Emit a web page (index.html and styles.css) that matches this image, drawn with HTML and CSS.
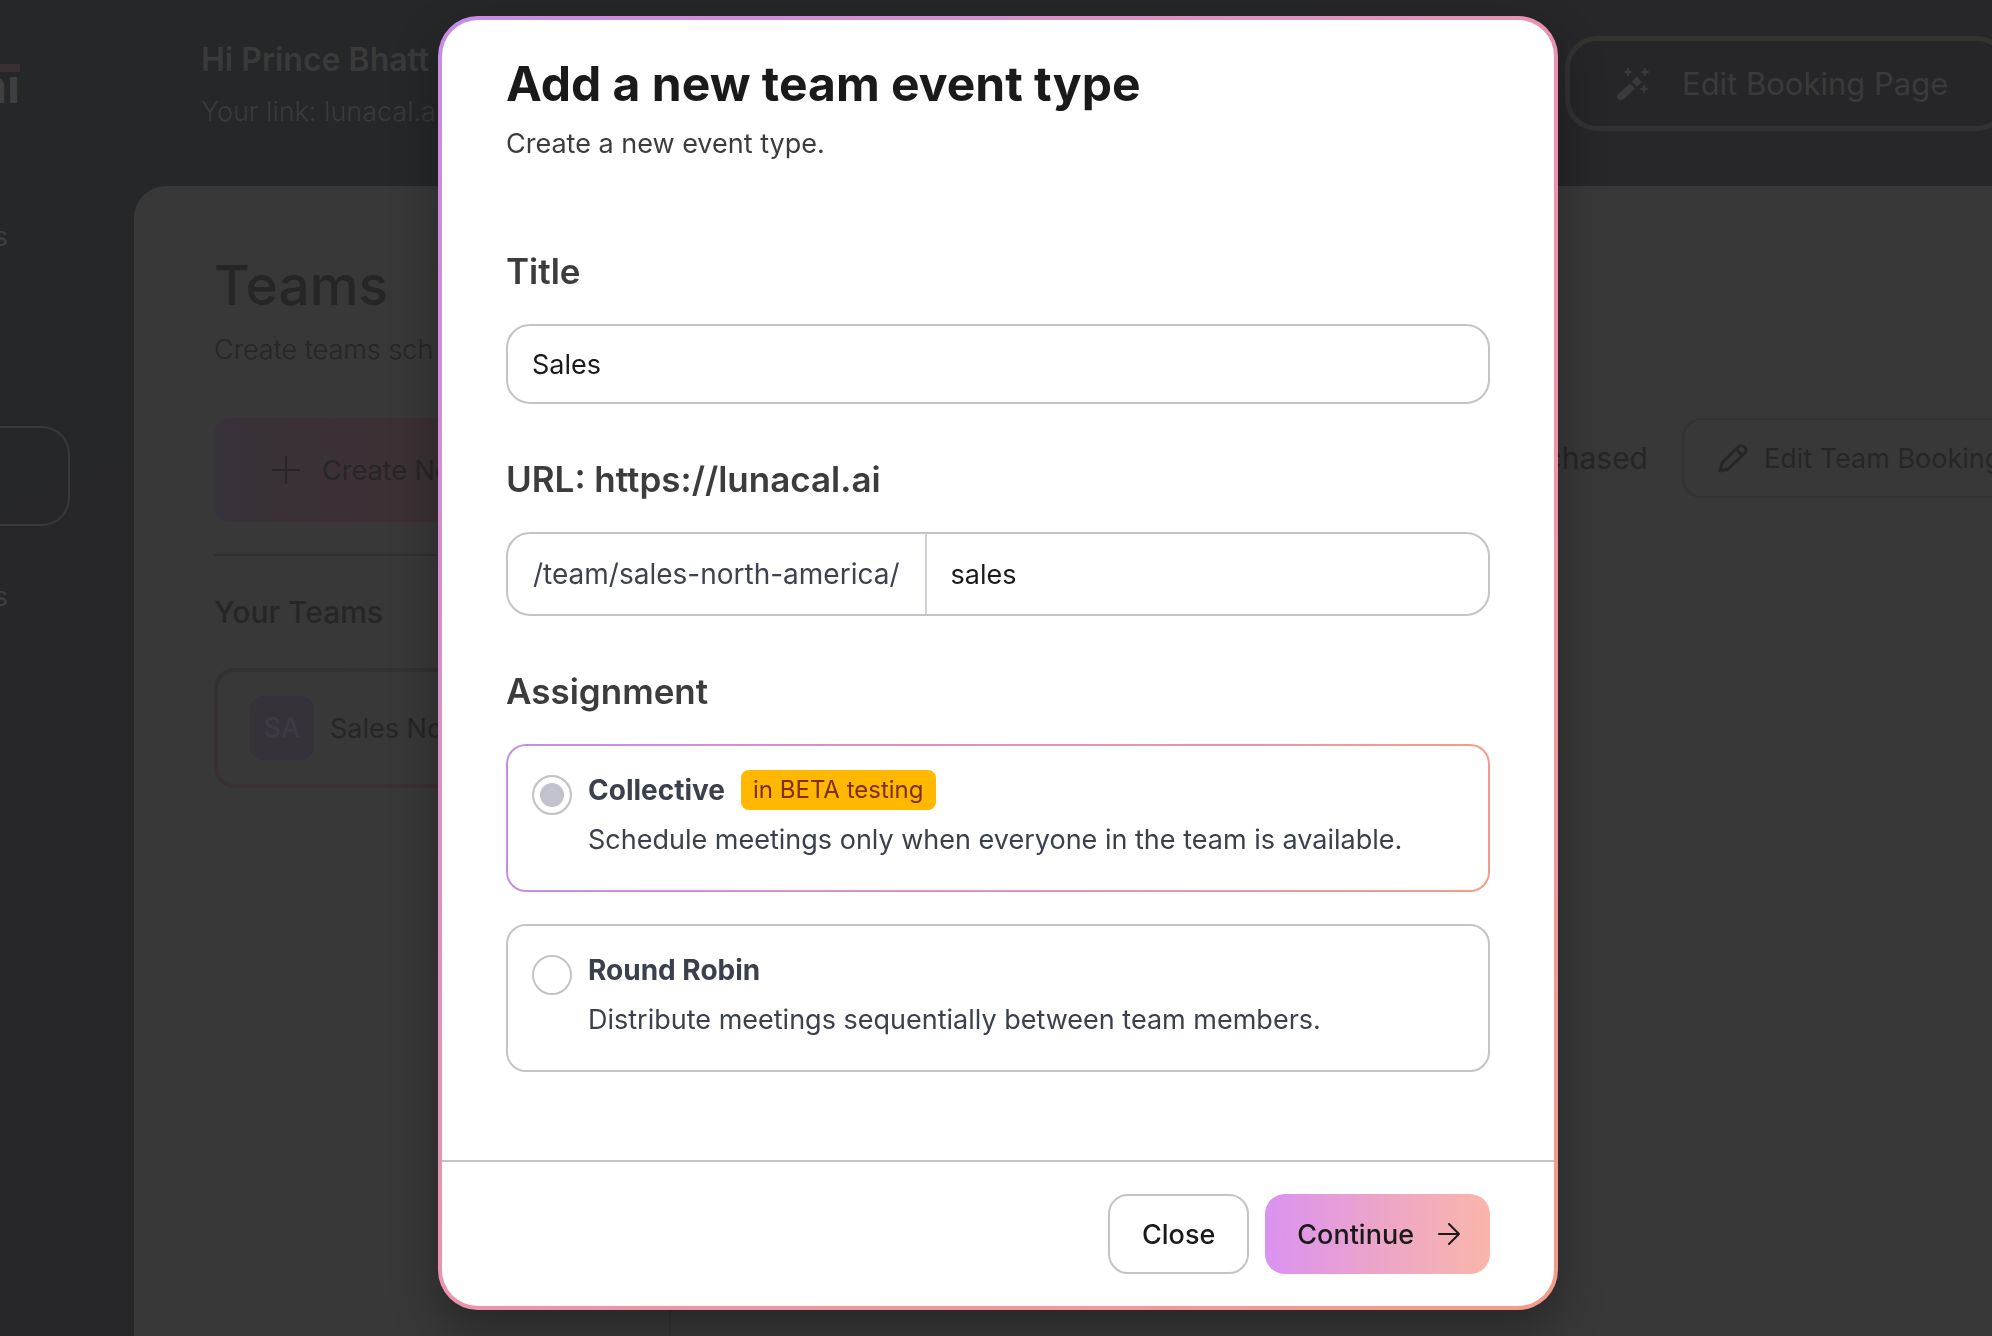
FILE: index.html
```html
<!DOCTYPE html>
<html lang="en">
<head>
  <meta charset="utf-8">
  <title>Add a new team event type</title>
  <link rel="stylesheet" href="styles.css">
</head>
<body>
  <div class="app">
    <aside class="sidebar">
      <div class="logo"><span class="logo-text">aı</span></div>
      <nav class="nav">
        <a class="nav-item" href="#">s</a>
        <a class="nav-item" href="#"></a>
        <a class="nav-item nav-item-active" href="#"></a>
        <a class="nav-item" href="#">s</a>
      </nav>
    </aside>

    <div class="main">
      <header class="topbar">
        <div class="greeting">
          <p class="greeting-name">Hi Prince Bhatt</p>
          <p class="greeting-link">Your link: lunacal.ai</p>
        </div>
        <button class="edit-page" type="button">
          <svg class="icon-wand" viewBox="0 0 34 34" aria-hidden="true">
            <path d="M1 28 14 16.500 19 21.500 8 32 4 33.500 1 31z M16 14.500 20.500 9.500 26 15 21 19.500z"/>
            <path d="M12 0 13.500 3.500 17 5 13.500 6.500 12 10 10.500 6.500 7 5 10.500 3.500z M29 0 30.500 3.500 34 5 30.500 6.500 29 10 27.500 6.500 24 5 27.500 3.500z M28 17 29.500 20.500 33 22 29.500 23.500 28 27 26.500 23.500 23 22 26.500 20.500z"/>
          </svg>
          Edit Booking Page
        </button>
      </header>

      <main class="panel">
        <h1 class="page-title">Teams</h1>
        <p class="page-sub">Create teams sch</p>
        <div class="toolbar">
          <button class="create" type="button">
            <svg class="icon-plus" viewBox="0 0 28 28" aria-hidden="true"><path d="M14 1v26M1 14h26"/></svg>
            Create New
          </button>
          <div class="toolbar-right">
            <span class="purchased">Purchased</span>
            <button class="edit-team" type="button">
              <svg class="icon-pencil" viewBox="0 0 30 30" aria-hidden="true"><path d="M2 28 4 20 20 4a4.500 4.500 0 0 1 6.500 6.500L10 26z M18 6l6.500 6.500"/></svg>
              Edit Team Booking Page
            </button>
          </div>
        </div>
        <section class="teams">
          <h2 class="teams-title">Your Teams</h2>
          <a class="team" href="#"><span class="avatar">SA</span>Sales North</a>
        </section>
      </main>
    </div>
  </div>

  <div class="overlay">
    <form class="modal" role="dialog" aria-labelledby="modal-title">
      <div class="modal-body">
        <h2 class="modal-title" id="modal-title">Add a new team event type</h2>
        <p class="modal-sub">Create a new event type.</p>

        <div class="field">
          <label class="label" for="title">Title</label>
          <input class="input" id="title" type="text" value="Sales">
        </div>

        <div class="field">
          <label class="label" for="slug">URL: https://lunacal.ai</label>
          <div class="input-group">
            <span class="prefix">/team/sales-north-america/</span>
            <input class="slug" id="slug" type="text" value="sales">
          </div>
        </div>

        <fieldset class="field">
          <legend class="label">Assignment</legend>
          <div class="options">
            <label class="option option-selected">
              <input class="radio" type="radio" name="assignment" checked>
              <span class="option-text">
                <span class="option-name">Collective <span class="badge">in BETA testing</span></span>
                <span class="option-desc">Schedule meetings only when everyone in the team is available.</span>
              </span>
            </label>
            <label class="option">
              <input class="radio" type="radio" name="assignment">
              <span class="option-text">
                <span class="option-name">Round Robin</span>
                <span class="option-desc">Distribute meetings sequentially between team members.</span>
              </span>
            </label>
          </div>
        </fieldset>
      </div>
      <footer class="modal-footer">
        <button class="btn btn-close" type="button">Close</button>
        <button class="btn btn-continue" type="submit">Continue
          <svg class="icon-arrow" viewBox="0 0 22 22" aria-hidden="true"><path d="M1 11h20M11 1l10 10-10 10"/></svg>
        </button>
      </footer>
    </form>
  </div>
</body>
</html>
```
FILE: styles.css
```css
* {
  box-sizing: border-box;
}

body {
  margin: 0;
  overflow: hidden;
  background: #272729;
  color: #262626;
  font-family: Inter, "Liberation Sans", sans-serif;
  font-size: 27px;
}

h1, h2, p {
  margin: 0;
}

button, input {
  font: inherit;
  color: inherit;
}

a {
  color: inherit;
  text-decoration: none;
}

svg {
  flex: none;
  fill: none;
  stroke: currentColor;
  stroke-width: 2;
  stroke-linejoin: round;
  stroke-linecap: round;
}

/* Page behind the dialog */

.app {
  display: flex;
  width: calc(100% + 200px);
  min-height: 100vh;
  background: linear-gradient(160deg, #252729 0%, #272729 30%, #272729 100%);
}

.sidebar {
  flex: none;
  width: 134px;
  color: #3e3f40;
}

.logo {
  display: flex;
  justify-content: flex-end;
  width: 20px;
  height: 186px;
  padding-top: 64px;
  overflow: hidden;
}

.logo-text {
  height: 44px;
  border-top: 8px solid #3a3033;
  font-size: 48px;
  font-weight: 700;
  line-height: 28px;
}

.nav {
  display: grid;
  grid-template-columns: 70px;
  gap: 20px;
}

.nav-item {
  display: flex;
  justify-content: flex-end;
  height: 100px;
  padding-right: 60px;
  line-height: 98px;
  border: 2px solid transparent;
  border-left: 0;
  border-radius: 0 28px 28px 0;
}

.nav-item-active {
  border-color: #38393a;
}

.main {
  flex: 1;
  display: flex;
  flex-direction: column;
}

.topbar {
  display: flex;
  justify-content: space-between;
  align-items: flex-start;
  height: 186px;
  padding: 36px 183px 0 67px;
  color: #3a3a3a;
}

.greeting-name {
  font-size: 32px;
  font-weight: 600;
  line-height: 48px;
}

.greeting-link {
  font-weight: 300;
  line-height: 56px;
}

.edit-page {
  display: flex;
  align-items: center;
  gap: 32px;
  width: 444px;
  height: 95px;
  padding: 0 46px;
  border: 5px solid #323135;
  border-top-color: #343330;
  border-radius: 32px;
  background: #262628;
  font-size: 31px;
  font-weight: 400;
  white-space: nowrap;
}

.icon-wand {
  width: 34px;
  height: 34px;
  fill: currentColor;
  stroke: none;
}

.panel {
  flex: 1;
  display: flex;
  flex-direction: column;
  padding: 64px 80px 0;
  border-radius: 32px 0 0 0;
  background: #383838;
}

.page-title {
  font-size: 55px;
  font-weight: 500;
  line-height: 70px;
}

.page-sub {
  margin-top: 8px;
  font-weight: 300;
  line-height: 44px;
}

.toolbar {
  display: flex;
  justify-content: space-between;
  align-items: flex-start;
  margin-top: 46px;
}

.create {
  display: flex;
  align-items: center;
  gap: 22px;
  width: 320px;
  height: 104px;
  padding: 0 58px;
  border: 0;
  border-radius: 16px;
  background: linear-gradient(90deg, #38323a, #3c3035 50%, #383233);
  white-space: nowrap;
}

.icon-plus {
  width: 28px;
  height: 28px;
}

.toolbar-right {
  display: flex;
  align-items: center;
  gap: 34px;
}

.purchased {
  font-size: 30px;
}

.edit-team {
  display: flex;
  align-items: center;
  gap: 16px;
  width: 430px;
  height: 80px;
  padding: 0 34px;
  border: 2px solid #333333;
  border-radius: 20px;
  background: none;
  white-space: nowrap;
}

.icon-pencil {
  width: 30px;
  height: 30px;
  stroke-width: 3;
}

.teams {
  flex: 1;
  width: 457px;
  margin-top: 32px;
  padding: 32px 24px 0 0;
  border-top: 2px solid #303030;
  border-right: 2px solid #303030;
}

.teams-title {
  font-size: 30px;
  font-weight: 500;
  line-height: 48px;
}

.team {
  display: flex;
  align-items: center;
  gap: 16px;
  margin-top: 32px;
  padding: 24px 32px;
  border: 4px solid transparent;
  border-radius: 20px;
  background:
    linear-gradient(#383838, #383838) padding-box,
    linear-gradient(170deg, #323133, #3e3034) border-box;
}

.avatar {
  width: 64px;
  height: 64px;
  border-radius: 14px;
  background: #37313a;
  color: #3e3a42;
  font-weight: 500;
  line-height: 64px;
  text-align: center;
}

/* Dialog */

.overlay {
  position: fixed;
  inset: 0;
  display: flex;
  justify-content: center;
  align-items: flex-start;
  padding: 16px 0 0 4px;
}

.modal {
  width: 1120px;
  max-width: 100%;
  border: 4px solid transparent;
  border-radius: 40px;
  background:
    linear-gradient(#ffffff, #ffffff) padding-box,
    linear-gradient(135deg, #c78ae8, #ea93b0 50%, #f59b8b) border-box;
  box-shadow: 0 20px 48px rgba(0, 0, 0, 0.3);
  color: #1a1a1a;
}

.modal-body {
  padding: 34px 64px 88px;
}

.modal-title {
  font-size: 48px;
  font-weight: 700;
  line-height: 60px;
}

.modal-sub {
  margin: 8px 0 30px;
  color: #3c3c3c;
  line-height: 44px;
}

.field {
  margin: 0;
  padding: 52px 0 0;
  border: 0;
}

fieldset.field {
  margin-top: 52px;
  padding: 0;
}

.label {
  display: block;
  margin-bottom: 30px;
  padding: 0;
  color: #3c3c3c;
  font-size: 35px;
  font-weight: 600;
  line-height: 46px;
}

.input {
  display: block;
  width: 100%;
  height: 80px;
  padding: 0 24px;
  border: 2px solid #c4c4c6;
  border-radius: 24px;
  background: #ffffff;
}

.input-group {
  display: flex;
  height: 84px;
  border: 2px solid #c4c4c6;
  border-radius: 24px;
}

.prefix {
  padding: 0 25px;
  border-right: 2px solid #d0d2d8;
  color: #3d4251;
  font-size: 28px;
  line-height: 80px;
}

.slug {
  flex: 1;
  min-width: 0;
  padding: 0 24px;
  border: 0;
  border-radius: 0 22px 22px 0;
  background: none;
}

.options {
  display: grid;
  gap: 32px;
}

.option {
  display: flex;
  gap: 16px;
  padding: 24px 24px 28px;
  border: 2px solid #c4c4c6;
  border-radius: 20px;
  color: #3a404c;
}

.option-selected {
  border-color: transparent;
  background:
    linear-gradient(#ffffff, #ffffff) padding-box,
    linear-gradient(90deg, #c78de4, #de93bf 50%, #f59b8b) border-box;
}

.radio {
  flex: none;
  appearance: none;
  width: 40px;
  height: 40px;
  margin: 5px 0 0;
  border: 2px solid #c4c4c6;
  border-radius: 50%;
}

.radio:checked {
  background: #c2c2cd;
  box-shadow: inset 0 0 0 6px #ffffff;
}

.option-text {
  display: grid;
  gap: 8px;
}

.option-name {
  display: flex;
  gap: 16px;
  font-size: 28px;
  font-weight: 700;
  line-height: 40px;
}

.badge {
  padding: 0 12px;
  border-radius: 8px;
  background: #ffb700;
  color: #7c2d12;
  font-size: 24px;
  font-weight: 400;
}

.option-desc {
  line-height: 44px;
}

.modal-footer {
  display: flex;
  justify-content: flex-end;
  gap: 16px;
  padding: 32px 64px;
  border-top: 2px solid #c4c4c6;
}

.btn {
  display: flex;
  align-items: center;
  height: 80px;
  padding: 0 32px;
  border: 0;
  border-radius: 20px;
  font-weight: 500;
}

.btn-close {
  border: 2px solid #c4c4c6;
  background: #ffffff;
}

.btn-continue {
  gap: 24px;
  padding-right: 30px;
  background: linear-gradient(90deg, #da92f2, #eea6c6 55%, #fab6aa);
}

.icon-arrow {
  width: 22px;
  height: 22px;
}
```
